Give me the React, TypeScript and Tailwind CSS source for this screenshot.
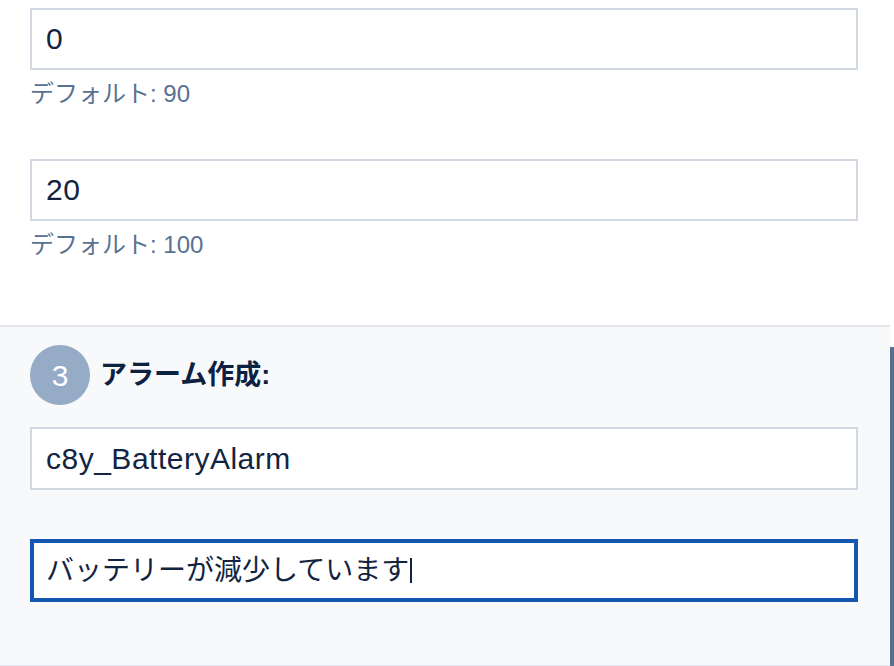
import React from 'react';

const FONT = { fontFamily: "'Liberation Sans', 'Noto Sans CJK JP', sans-serif" };

function Field({ value, tall }: { value: string; tall?: boolean }) {
  return (
    <div className={`flex ${tall ? 'h-[63px]' : 'h-[62px]'} items-center border-2 border-[#d3d9e2] bg-white px-[14px]`}>
      <span className="text-[30px] leading-none tracking-[0.5px] text-[#12243f]">{value}</span>
    </div>
  );
}

function Hint({ children }: { children: React.ReactNode }) {
  return <p className="mt-[8px] text-[24px] leading-[32px] text-[#587291]">{children}</p>;
}

export default function App() {
  return (
    <div className="flex h-[666px] w-[894px] overflow-hidden bg-white" style={FONT}>
      <div className="flex w-[890px] flex-col">
        {/* ── Seuils ── */}
        <div className="pl-[30px] pr-[32px] pt-[8px] pb-[64px]">
          <Field value="0" />
          <Hint>デフォルト: 90</Hint>
          <div className="mt-[49px]">
            <Field value="20" />
          </div>
          <Hint>デフォルト: 100</Hint>
        </div>

        {/* ── Step 3 ── */}
        <div className="flex-1 border-t-2 border-b border-[#e2e5ea] bg-[#f8f9fb] pl-[30px] pr-[32px] pt-[18px]">
          <div className="flex h-[60px] items-center gap-[10px]">
            <div className="flex h-[60px] w-[60px] items-center justify-center rounded-full bg-[#95abc6] text-[30px] text-white">
              3
            </div>
            <h2 className="text-[27px] font-bold text-[#0d2140]">アラーム作成:</h2>
          </div>
          <div className="mt-[22px]">
            <Field value="c8y_BatteryAlarm" tall />
          </div>
          <div className="mt-[49px] flex h-[63px] items-center border-4 border-[#1557b0] bg-white pl-[12px]">
            <span className="text-[28px] leading-none text-[#12243f]">バッテリーが減少しています</span>
            <span className="ml-[1px] h-[25px] w-[2px] bg-[#12243f]" />
          </div>
        </div>
      </div>

      {/* ── scroll indicator ── */}
      <div className="flex w-[4px] flex-col">
        <div className="h-[347px]" />
        <div className="flex-1 bg-[#56718f]" />
      </div>
    </div>
  );
}
